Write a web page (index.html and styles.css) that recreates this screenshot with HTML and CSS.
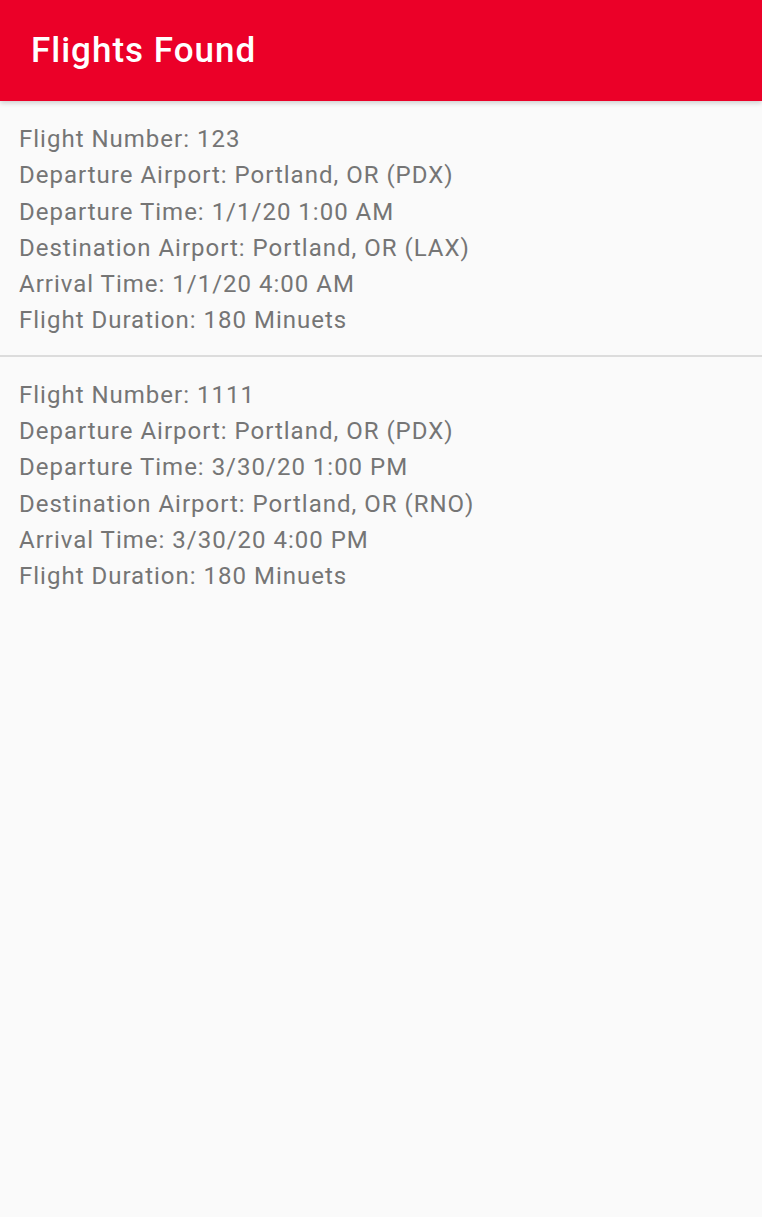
FILE: index.html
```html
<!DOCTYPE html>
<html>
<head>
<meta charset="utf-8">
<link rel="stylesheet" href="styles.css">
</head>
<body>
<header class="toolbar">
  <h1 class="title">Flights Found</h1>
</header>
<main class="list">
  <section class="item">
    <p>Flight Number: 123</p>
    <p>Departure Airport: Portland, OR (PDX)</p>
    <p>Departure Time: 1/1/20 1:00 AM</p>
    <p>Destination Airport: Portland, OR (LAX)</p>
    <p>Arrival Time: 1/1/20 4:00 AM</p>
    <p>Flight Duration: 180 Minuets</p>
  </section>
  <div class="divider"></div>
  <section class="item">
    <p>Flight Number: 1111</p>
    <p>Departure Airport: Portland, OR (PDX)</p>
    <p>Departure Time: 3/30/20 1:00 PM</p>
    <p>Destination Airport: Portland, OR (RNO)</p>
    <p>Arrival Time: 3/30/20 4:00 PM</p>
    <p>Flight Duration: 180 Minuets</p>
  </section>
</main>
</body>
</html>
```
FILE: styles.css
```css
html, body {
  margin: 0;
  padding: 0;
  height: 100%;
}
body {
  background: #fafafa;
  font-family: Roboto, "Noto Sans", sans-serif;
}
.toolbar {
  height: 101px;
  background: #eb0028;
  display: flex;
  align-items: center;
  padding-left: 31px;
  box-shadow: 0 2px 5px rgba(0,0,0,0.18);
  position: relative;
}
.title {
  margin: 0;
  color: #ffffff;
  font-size: 35px;
  font-weight: 500;
  letter-spacing: 1px;
  line-height: 1;
}
.item {
  padding: 20px 19px 16px;
}
.item p {
  margin: 0;
  font-size: 24px;
  line-height: 36.3px;
  letter-spacing: 1px;
  color: #757575;
}
.divider {
  height: 2px;
  background: #dcdcdc;
}
```
